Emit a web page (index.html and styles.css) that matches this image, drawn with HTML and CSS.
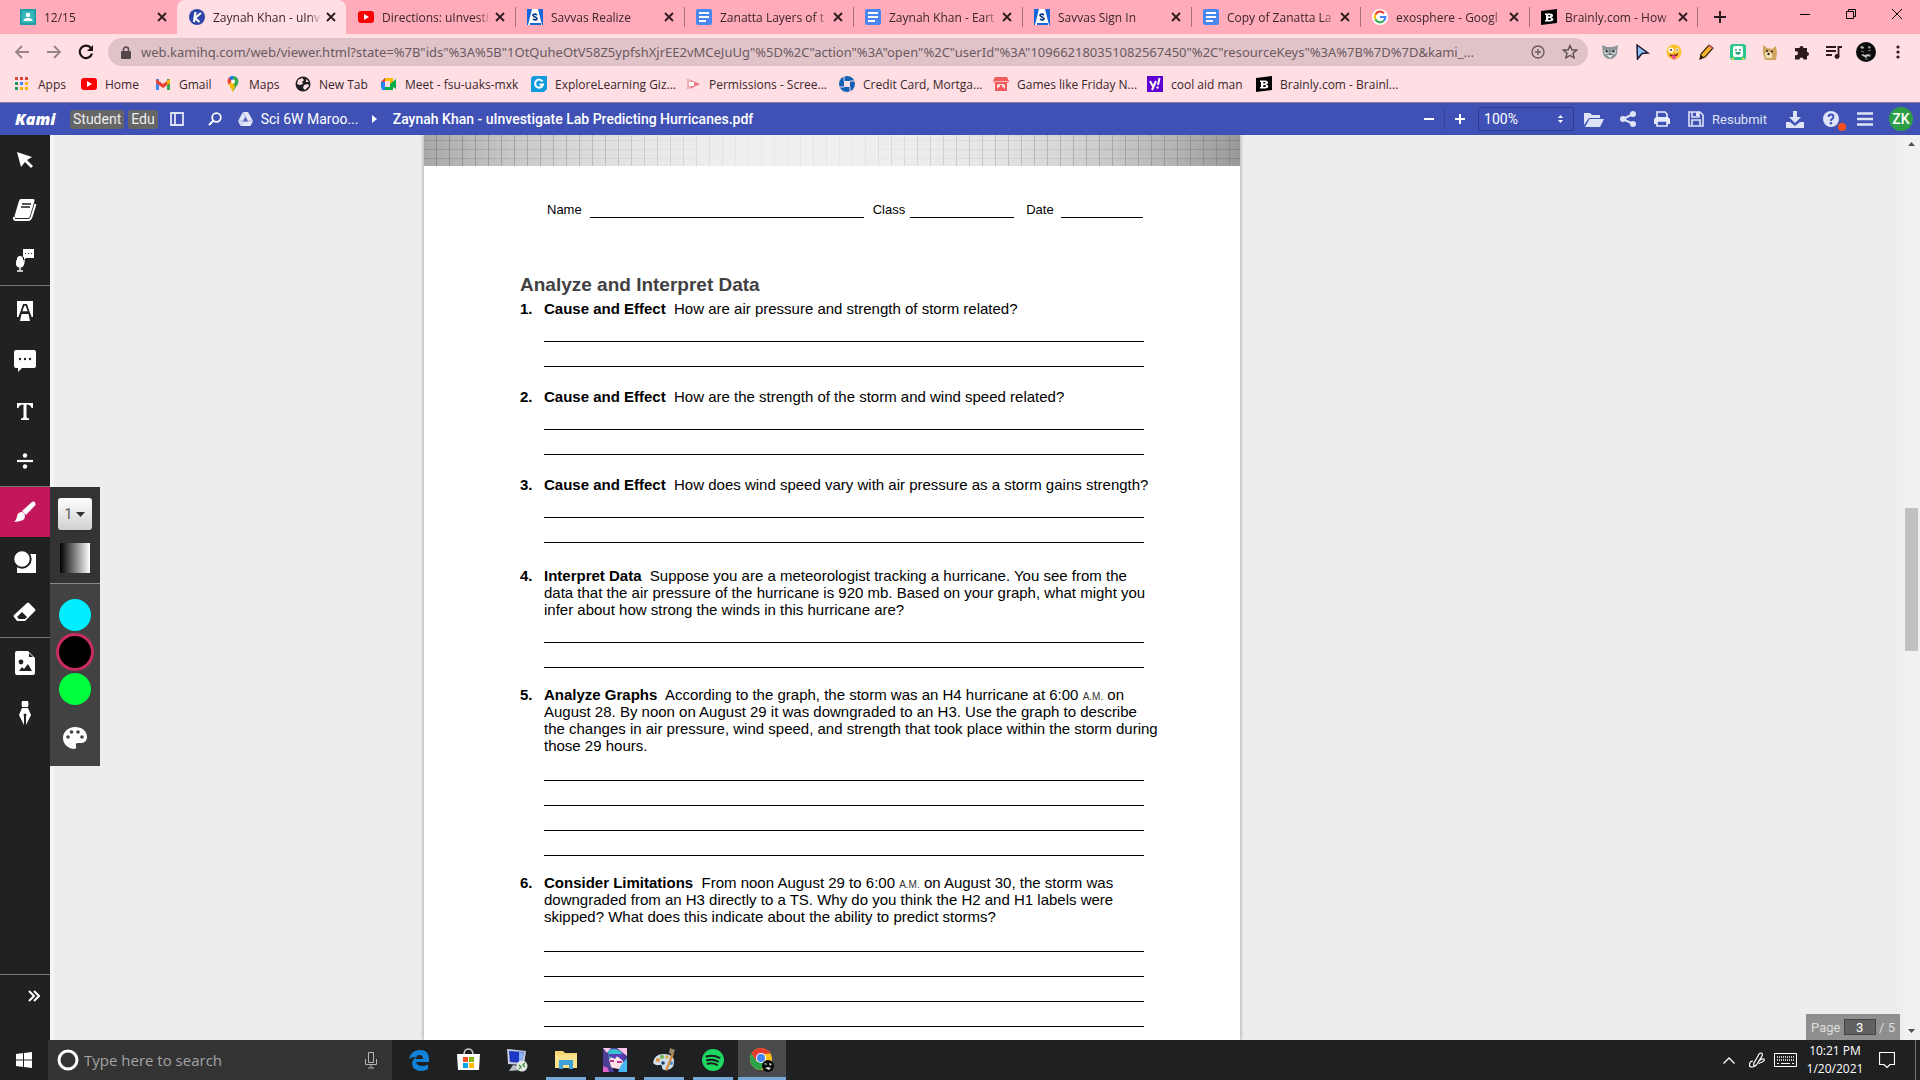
FILE: index.html
```html
<!DOCTYPE html>
<html lang="en">
<head>
    <meta charset="UTF-8">
    <meta name="viewport" content="width=device-width, initial-scale=1.0">
    <title>Zaynah Khan - uInvestigate Lab Predicting Hurricanes.pdf</title>

    <link rel="stylesheet" href="styles.css">
</head>
<body>

<!-- shared icons -->
<svg class="defs" aria-hidden="true">
    <symbol id="i-close" viewBox="0 0 10 10"><path d="M1 1l8 8M9 1L1 9" stroke="#2c1a1e" stroke-width="1.8"/></symbol>
    <symbol id="i-youtube" viewBox="0 0 16 16"><rect x="0" y="2" width="16" height="12" rx="3" fill="#f00"/><path d="M6 5v6l5-3z" fill="#fff"/></symbol>
    <symbol id="i-savvas" viewBox="0 0 16 16"><path d="M0 0h16v16H0z" fill="#fff"/><path d="M0 0h5L1 16H0zM11 0h5v16h-1z" fill="#1765d8"/><path d="M3 14h11v2H3z" fill="#1765d8"/><path d="M10 6Q8 4.500 6.500 5.500T8 8t1.500 2.500T6 10" fill="none" stroke="#0b3a86" stroke-width="1.700"/></symbol>
    <symbol id="i-docs" viewBox="0 0 16 16"><rect width="16" height="16" rx="2" fill="#4a86f0"/><path d="M3 4h10M3 8h10M3 12h7" stroke="#fff" stroke-width="1.800"/></symbol>
    <symbol id="i-brainly" viewBox="0 0 16 16"><path d="M0 2l16-2v14L0 16z" fill="#000"/><path d="M4 4.500h5q3 0 3 2t-2 2q2.500.300 2.500 2t-3 2H4v-1.500h1V6H4zM7.300 6v1.600h1q1.300 0 1.300-.8T8.300 6zm0 3v2h1.300q1.400 0 1.400-1T8.600 9z" fill="#fff" fill-rule="evenodd"/></symbol>
</svg>

<header class="browser">
    <!-- tabs -->
    <div class="tabs">
        <div class="tab">
            <svg class="ico" viewBox="0 0 16 16"><rect width="16" height="16" rx="1" fill="#1f9fa5"/><rect x="2" y="2" width="12" height="12" fill="#35b9b8"/><circle cx="8" cy="6" r="2.200" fill="#fff"/><path d="M3.500 12q0-3 4.500-3t4.500 3z" fill="#fff"/></svg>
            <button class="tab-title">12/15</button>
            <button class="tab-close" aria-label="Close"><svg><use href="#i-close"/></svg></button>
        </div>
        <div class="tab active">
            <svg class="ico" viewBox="0 0 16 16"><circle cx="8" cy="8" r="8" fill="#2f45a8"/><path d="M6.500 3L5 13M12 4L6 9l4.500 4" stroke="#fff" stroke-width="2.200" fill="none"/></svg>
            <button class="tab-title">Zaynah Khan - uInv</button>
            <button class="tab-close" aria-label="Close"><svg><use href="#i-close"/></svg></button>
        </div>
        <div class="tab">
            <svg class="ico"><use href="#i-youtube"/></svg>
            <button class="tab-title">Directions: uInvesti</button>
            <button class="tab-close" aria-label="Close"><svg><use href="#i-close"/></svg></button>
        </div>
        <div class="tab sep">
            <svg class="ico"><use href="#i-savvas"/></svg>
            <button class="tab-title">Savvas Realize</button>
            <button class="tab-close" aria-label="Close"><svg><use href="#i-close"/></svg></button>
        </div>
        <div class="tab sep">
            <svg class="ico"><use href="#i-docs"/></svg>
            <button class="tab-title">Zanatta Layers of t</button>
            <button class="tab-close" aria-label="Close"><svg><use href="#i-close"/></svg></button>
        </div>
        <div class="tab sep">
            <svg class="ico"><use href="#i-docs"/></svg>
            <button class="tab-title">Zaynah Khan - Eart</button>
            <button class="tab-close" aria-label="Close"><svg><use href="#i-close"/></svg></button>
        </div>
        <div class="tab sep">
            <svg class="ico"><use href="#i-savvas"/></svg>
            <button class="tab-title">Savvas Sign In</button>
            <button class="tab-close" aria-label="Close"><svg><use href="#i-close"/></svg></button>
        </div>
        <div class="tab sep">
            <svg class="ico"><use href="#i-docs"/></svg>
            <button class="tab-title">Copy of Zanatta La</button>
            <button class="tab-close" aria-label="Close"><svg><use href="#i-close"/></svg></button>
        </div>
        <div class="tab sep">
            <svg class="ico" viewBox="0 0 16 16"><circle cx="8" cy="8" r="8" fill="#fff"/><g fill="none" stroke-width="2.200"><path d="M12 4.300A5.300 5.300 0 0 0 3.400 5.600" stroke="#ea4335"/><path d="M3.400 5.600a5.300 5.300 0 0 0 0 4.800" stroke="#fbbc05"/><path d="M3.400 10.400a5.300 5.300 0 0 0 8.400 1.400" stroke="#34a853"/><path d="M11.800 11.800A5.300 5.300 0 0 0 13.300 8H8" stroke="#4285f4"/></g></svg>
            <button class="tab-title">exosphere - Googl</button>
            <button class="tab-close" aria-label="Close"><svg><use href="#i-close"/></svg></button>
        </div>
        <div class="tab sep last">
            <svg class="ico"><use href="#i-brainly"/></svg>
            <button class="tab-title">Brainly.com - How</button>
            <button class="tab-close" aria-label="Close"><svg><use href="#i-close"/></svg></button>
        </div>
        <button class="new-tab" aria-label="New tab"><svg width="12" height="12" viewBox="0 0 12 12"><path d="M6 0v12M0 6h12" stroke="#2c1a1e" stroke-width="2"/></svg></button>
        <div class="win-btns">
            <button aria-label="Minimize"><svg width="10" height="10" viewBox="0 0 10 10"><path d="M0 5.500h10" stroke="#000"/></svg></button>
            <button aria-label="Restore"><svg width="10" height="10" viewBox="0 0 10 10"><path d="M.5 2.500h7v7h-7zM2.500 2.500v-2h7v7h-2" stroke="#000" fill="none"/></svg></button>
            <button aria-label="Close window"><svg width="10" height="10" viewBox="0 0 10 10"><path d="M0 0l10 10M10 0L0 10" stroke="#000"/></svg></button>
        </div>
    </div>

    <!-- address bar -->
    <div class="toolbar">
        <div class="nav-btns">
            <button aria-label="Back"><svg width="16" height="16" viewBox="0 0 16 16"><path d="M15 8H2M8 2L2 8l6 6" stroke="#97848a" stroke-width="1.800" fill="none"/></svg></button>
            <button aria-label="Forward"><svg width="16" height="16" viewBox="0 0 16 16"><path d="M1 8h13M8 2l6 6-6 6" stroke="#97848a" stroke-width="1.800" fill="none"/></svg></button>
            <button aria-label="Reload"><svg width="16" height="16" viewBox="0 0 16 16"><path d="M13 4.200A6.200 6.200 0 1 0 14 9.500" stroke="#1c1214" stroke-width="2.200" fill="none"/><path d="M15 1v6H9z" fill="#1c1214"/></svg></button>
        </div>
        <div class="omnibox">
            <svg width="10" height="13" viewBox="0 0 10 13"><rect y="5" width="10" height="8" rx="1" fill="#55484c"/><path d="M2.500 5.500V3.500a2.500 2.500 0 0 1 5 0v2" stroke="#55484c" stroke-width="1.500" fill="none"/></svg>
            <input type="text" aria-label="Address" value="web.kamihq.com/web/viewer.html?state=%7B&quot;ids&quot;%3A%5B&quot;1OtQuheOtV58Z5ypfshXjrEE2vMCeJuUg&quot;%5D%2C&quot;action&quot;%3A&quot;open&quot;%2C&quot;userId&quot;%3A&quot;109662180351082567450&quot;%2C&quot;resourceKeys&quot;%3A%7B%7D%7D&amp;kami_...">
            <button aria-label="Zoom"><svg width="14" height="14" viewBox="0 0 14 14"><circle cx="7" cy="7" r="6" fill="none" stroke="#6b5a60" stroke-width="1.400"/><path d="M7 4v6M4 7h6" stroke="#6b5a60" stroke-width="1.400"/></svg></button>
            <button aria-label="Bookmark"><svg width="16" height="16" viewBox="0 0 16 16"><path d="M8 1.500l1.900 4.300 4.700.4-3.600 3.100 1.100 4.600L8 11.500l-4.100 2.400L5 9.300 1.400 6.200l4.700-.4z" fill="none" stroke="#5c4d52" stroke-width="1.400"/></svg></button>
        </div>
        <div class="exts">
            <button aria-label="Cat"><svg viewBox="0 0 16 16"><path d="M0 1l5 2h6l5-2-1 9q-2 5-7 5t-7-5z" fill="#8e989c"/><path d="M2 6l5 3-4 1zM14 6L9 9l4 1z" fill="#fff"/><circle cx="4.500" cy="7.500" r="1.200" fill="#333"/><circle cx="11.500" cy="7.500" r="1.200" fill="#333"/><path d="M5 11h6l-3 3z" fill="#e8ecec"/><path d="M7 10h2l-1 1.500z" fill="#333"/></svg></button>
            <button aria-label="Custom cursor"><svg viewBox="0 0 16 16"><path d="M3 1l11 8-6 .5L3.500 15z" fill="#8fc4f4" stroke="#1c1633" stroke-width="1.500"/></svg></button>
            <button aria-label="Emoji"><svg viewBox="0 0 16 16"><circle cx="8" cy="8" r="7.500" fill="#fcc32e"/><circle cx="5" cy="6" r="2.600" fill="#fff"/><circle cx="11" cy="6" r="1.800" fill="#fff"/><circle cx="5" cy="6" r="1" fill="#4a2b0c"/><circle cx="11" cy="6" r=".8" fill="#4a2b0c"/><path d="M3.500 10q4 2 9-1-1 4-5 4t-4-3z" fill="#7a2b12"/><path d="M6 11.500h4V14q-2 3-4 0z" fill="#f0559a"/></svg></button>
            <button aria-label="Pencil"><svg viewBox="0 0 16 16"><path d="M2 15l1-5L11 1l4 3-8 9z" fill="#f5b62a" stroke="#3b2308" stroke-width="1.200"/><path d="M2 15l1-4 3 2.500z" fill="#2b1a0a"/><path d="M10 2l4 3 1-1-4-3z" fill="#e7607b"/></svg></button>
            <button aria-label="Bitmoji"><svg viewBox="0 0 16 16"><rect width="16" height="16" rx="3" fill="#29c78f"/><rect x="3" y="2" width="10" height="11" rx="2" fill="#fff"/><circle cx="6" cy="6" r="1" fill="#29a37a"/><circle cx="10" cy="6" r="1" fill="#29a37a"/><path d="M5 8h6q-1 3-3 3T5 8z" fill="#29a37a"/><path d="M1 15l3-2v3zM15 15l-3-2v3z" fill="#f2d43b"/></svg></button>
            <button aria-label="Doge"><svg viewBox="0 0 16 16"><path d="M1 1l4 3 5 1 4-3 1 7-1 7H3L1 9z" fill="#cfa45f"/><path d="M3 9q4-3 7 1v4H4z" fill="#f3e3bd"/><circle cx="5" cy="7" r="1" fill="#2d2013"/><circle cx="10" cy="7.500" r="1" fill="#2d2013"/><circle cx="6.500" cy="10" r="1.200" fill="#2d2013"/></svg></button>
            <button aria-label="Extensions"><svg viewBox="0 0 16 16"><path d="M1 4h4.500a2 2 0 1 1 4 0H13v4a2 2 0 1 1 0 4v3.500H9.500a2 2 0 1 0-4 0H1V11a2 2 0 1 0 0-3.500z" fill="#2c1a1e"/></svg></button>
            <button aria-label="Media"><svg viewBox="0 0 16 16"><path d="M0 3h10M0 7h10M0 11h6M12.500 13V3H16" stroke="#2c1a1e" stroke-width="1.800" fill="none"/><circle cx="11" cy="12.500" r="2.400" fill="#2c1a1e"/></svg></button>
            <button aria-label="Profile"><svg class="profile" viewBox="0 0 20 20"><circle cx="10" cy="10" r="10" fill="#0b0b0b"/><path d="M4 5l3-1 1 2-2 1zM12 4l3 1-2 2zM5 13l2-1 2 1 3-1 2 1 1-2-1 4-2-1-2 2-3-2z" fill="#bdbdbd"/><path d="M5 9l3 1M12 9l3-1M9 17h3" stroke="#777"/></svg></button>
            <button aria-label="Menu"><svg viewBox="0 0 16 16"><circle cx="8" cy="3" r="1.600" fill="#2c1a1e"/><circle cx="8" cy="8" r="1.600" fill="#2c1a1e"/><circle cx="8" cy="13" r="1.600" fill="#2c1a1e"/></svg></button>
        </div>
    </div>

    <!-- bookmarks -->
    <nav class="bookmarks">
        <a href="#"><svg class="ico" viewBox="0 0 16 16"><path d="M1 1h3v3H1zM6 1h3v3H6z" fill="#db4437"/><path d="M11 1h3v3h-3z" fill="#db4437"/><path d="M1 6h3v3H1z" fill="#0f9d58"/><path d="M6 6h3v3H6z" fill="#4285f4"/><path d="M11 6h3v3h-3zM6 11h3v3H6zM11 11h3v3h-3z" fill="#f4b400"/><path d="M1 11h3v3H1z" fill="#0f9d58"/></svg>Apps</a>
        <a href="#"><svg class="ico"><use href="#i-youtube"/></svg>Home</a>
        <a href="#"><svg class="ico" viewBox="0 0 16 16"><path d="M1 3h3v11H1z" fill="#4285f4"/><path d="M12 3h3v11h-3z" fill="#34a853"/><path d="M1 3l7 5 7-5v4l-7 5-7-5z" fill="#ea4335"/><path d="M12 5l3-2v4l-3 2z" fill="#fbbc04"/></svg>Gmail</a>
        <a href="#"><svg class="ico" viewBox="0 0 16 16"><path d="M8 0a5.500 5.500 0 0 1 5.500 5.500Q13.500 8 11 11t-3 5z" fill="#34a853"/><path d="M8 0a5.500 5.500 0 0 0-4.500 2L8 6z" fill="#1a73e8"/><path d="M3.500 2Q1.500 5 3.500 8.500L8 5z" fill="#ea4335"/><path d="M3.500 8.500L8 16q0-3 2-5L8 5z" fill="#fbbc04"/><circle cx="8" cy="5.500" r="2" fill="#fff"/></svg>Maps</a>
        <a href="#"><svg class="ico" viewBox="0 0 16 16"><circle cx="8" cy="8" r="7.500" fill="#1f1f23"/><path d="M3 4l4-2 2 2-2 2 1 2-3 1-3-1zM9 9l4-1 1 2-4 4-2-2zM11 3l3 3h-3z" fill="#ffdfe4"/></svg>New Tab</a>
        <a href="#"><svg class="ico" viewBox="0 0 16 16"><path d="M0 6l4-4h7v3H4v6H0z" fill="#1a73e8"/><path d="M0 6l4-4v4z" fill="#ea4335"/><path d="M4 2h8v5l-3 1V5H4z" fill="#fbbc04"/><path d="M0 10h4v1h5V8l6-5v10l-3-2v3H1z" fill="#00ac47"/><path d="M0 6h4v8H1z" fill="#2684fc"/></svg>Meet - fsu-uaks-mxk</a>
        <a href="#"><svg class="ico" viewBox="0 0 16 16"><path d="M2 0h14v13l-3 3H0V2z" fill="#109bdc"/><path d="M11.500 5.500a4 4 0 1 0 .5 3H8.500" fill="none" stroke="#fff" stroke-width="2"/></svg>ExploreLearning Giz...</a>
        <a href="#"><svg class="ico" viewBox="0 0 16 16"><path d="M1 2l14 6-14 6 1-3V5z" fill="#f2b0b6"/><path d="M5 4l10 4-10 5 1-3h3V6H6z" fill="#e87a86"/><path d="M4 6h5v4H4z" fill="#fff"/></svg>Permissions - Scree...</a>
        <a href="#"><svg class="ico" viewBox="0 0 16 16"><circle cx="8" cy="8" r="8" fill="#1261b4"/><path d="M5 5h6v6H5z" fill="#ffdfe4"/><path d="M5 0v5M16 5h-5M11 16v-5M0 11h5" stroke="#ffdfe4" stroke-width="1"/></svg>Credit Card, Mortga...</a>
        <a href="#"><svg class="ico" viewBox="0 0 16 16"><path d="M2 1h12l2 4q-1 2-2 2v8H2V7Q1 7 0 5z" fill="#f05a5b"/><path d="M4 13V9l1.500-1h5L12 9v4l-2-2H6z" fill="#ffdfe4"/><path d="M7 9h2v2H7z" fill="#f05a5b"/><path d="M1 5.500h14" stroke="#fbb"/></svg>Games like Friday N...</a>
        <a href="#"><svg class="ico" viewBox="0 0 16 16"><path d="M0 0h16v16H0z" fill="#5f01d1"/><path d="M3 5l3 5.500M9 5l-4 9M12.500 2l-1.500 7" stroke="#fff" stroke-width="2" fill="none"/><circle cx="10.500" cy="11.500" r="1.200" fill="#fff"/></svg>cool aid man</a>
        <a href="#"><svg class="ico"><use href="#i-brainly"/></svg>Brainly.com - Brainl...</a>
    </nav>
</header>

<!-- kami header -->
<div class="kami-bar">
    <a class="kami-logo" href="#">Kami</a>
    <span class="badge">Student</span>
    <span class="badge">Edu</span>
    <button class="panel-btn" aria-label="Thumbnails"><svg width="14" height="14" viewBox="0 0 14 14"><path d="M1 1h12v12H1zM5 1v12" fill="none" stroke="#dfe3f7" stroke-width="1.800"/></svg></button>
    <button class="find-btn" aria-label="Search"><svg width="14" height="14" viewBox="0 0 14 14"><circle cx="8.500" cy="5.500" r="4.300" fill="none" stroke="#fff" stroke-width="1.800"/><path d="M5.500 8.500L1 13" stroke="#fff" stroke-width="2"/></svg></button>
    <a class="folder" href="#"><svg width="15" height="14" viewBox="0 0 15 14"><path d="M5 0h5l5 9-2.500 5h-10L0 9z" fill="#e3e6f8"/><path d="M7.500 5L10 9.500H5z" fill="#3f51b5"/><path d="M5 0l4.500 8.500M0 9h15M7.500 4L2.500 14" stroke="#8b97d6" stroke-width=".6"/></svg>Sci 6W Maroo...</a>
    <svg class="crumb" width="5" height="8" viewBox="0 0 5 8"><path d="M0 0l5 4-5 4z" fill="#fff"/></svg>
    <span class="file-name">Zaynah Khan - uInvestigate Lab Predicting Hurricanes.pdf</span>
    <div class="kami-tools">
        <button class="zoom-btn" aria-label="Zoom out"><svg width="10" height="10" viewBox="0 0 10 10"><path d="M0 5h10" stroke="#fff" stroke-width="2"/></svg></button>
        <button class="zoom-btn plus" aria-label="Zoom in"><svg width="10" height="10" viewBox="0 0 10 10"><path d="M0 5h10M5 0v10" stroke="#fff" stroke-width="2"/></svg></button>
        <div class="zoom-select">
            <select aria-label="Zoom level"><option>100%</option></select>
            <svg width="5" height="8" viewBox="0 0 5 8"><path d="M0 3l2.500-3L5 3zM0 5l2.500 3L5 5z" fill="#fff"/></svg>
        </div>
        <button class="t-btn" aria-label="Open"><svg width="20" height="15" viewBox="0 0 20 15"><path d="M0 13V1h6l2 2h8v3H5z" fill="#dfe3f7"/><path d="M1 15l4.500-8H20l-4 8z" fill="#dfe3f7"/></svg></button>
        <button class="t-btn" aria-label="Share"><svg width="16" height="16" viewBox="0 0 16 16"><path d="M13 3L3 8l10 5" fill="none" stroke="#dfe3f7" stroke-width="2"/><circle cx="13" cy="3" r="3" fill="#dfe3f7"/><circle cx="3" cy="8" r="3" fill="#dfe3f7"/><circle cx="13" cy="13" r="3" fill="#dfe3f7"/></svg></button>
        <button class="t-btn" aria-label="Print"><svg width="16" height="16" viewBox="0 0 16 16"><path d="M3 7V1h8l2 2v4M3 10v5h10v-5z" fill="none" stroke="#e8ebfa" stroke-width="1.600"/><path d="M0 13V8l2-2h12l2 2v5h-3v-3H3v3z" fill="#e8ebfa"/></svg></button>
        <button class="save-btn"><svg width="16" height="16" viewBox="0 0 16 16"><path d="M1 1h11l3 3v11H1zM4 1v5h7V1M4 15V9h8v6" fill="none" stroke="#dfe3f7" stroke-width="1.600"/><path d="M8 1h3v4H8z" fill="#dfe3f7"/></svg>Resubmit</button>
        <button class="t-btn dl" aria-label="Download"><svg width="18" height="18" viewBox="0 0 18 18"><path d="M7 1h4v6h4l-6 6-6-6h4z" fill="#dfe3f7"/><path d="M0 12h4l5 4 5-4h4v6H0z" fill="#dfe3f7"/></svg></button>
        <button class="t-btn help" aria-label="Help"><svg width="16" height="16" viewBox="0 0 16 16"><circle cx="8" cy="8" r="8" fill="#dfe3f7"/><path d="M5.500 6q0-2.500 2.500-2.500T10.500 6Q10.500 7 8 9v1" fill="none" stroke="#3f51b5" stroke-width="1.800"/><circle cx="8" cy="12.300" r="1.200" fill="#3f51b5"/></svg></button>
        <button class="t-btn" aria-label="Menu"><svg width="16" height="14" viewBox="0 0 16 14"><path d="M0 1.500h16M0 7h16M0 12.500h16" stroke="#dfe3f7" stroke-width="2.600"/></svg></button>
        <button class="avatar">ZK</button>
    </div>
</div>

<main class="workspace">
    <!-- tools -->
    <aside class="sidebar">
        <button aria-label="Select"><svg width="18" height="18" viewBox="0 0 18 18"><path d="M1 1l15 5-5 3 6 6-2 2-6-6-4 5z" fill="#fff"/></svg></button>
        <button aria-label="Dictionary"><svg width="24" height="24" viewBox="0 0 24 24"><path d="M8 1h12q2 0 1.500 2L17 18q-.5 2-2 2H3q-2 0-1.500-2L6 3q.5-2 2-2z" fill="#fff"/><path d="M22.500 6L18.500 19q-1 3-3.500 3H3q-2.500 0-2-3" fill="none" stroke="#fff" stroke-width="2"/><path d="M9 6h9M8 9h9" stroke="#212121" stroke-width="1.300"/></svg></button>
        <button aria-label="Read aloud"><svg width="18" height="24" viewBox="0 0 18 24"><path d="M7 1h11v9h-8l-2 2V9H7z" fill="#fff"/><path d="M9 5.500h7" stroke="#212121" stroke-dasharray="1 2"/><rect x="1" y="8" width="6" height="11" rx="3" fill="#fff"/><path d="M0 12q0 7 4 7t4-7M4 18v4M1 23h6" fill="none" stroke="#fff" stroke-width="1.500"/></svg></button>
        <hr>
        <button aria-label="Markup"><svg width="18" height="20" viewBox="0 0 18 20"><path d="M1 0h16v16h-2L11 3H7L3 16H1z" fill="#fff"/><path d="M8 4h2l2 7H6zM5.500 13h7l1.500 7H4z" fill="#fff"/><path d="M3 16L8 4h2l5 12M6 11h6" fill="none" stroke="#212121" stroke-width="1.300"/></svg></button>
        <button aria-label="Comment"><svg width="22" height="22" viewBox="0 0 22 22"><path d="M2 0h18q2 0 2 2v14q0 2-2 2H8l-4 4v-4H2q-2 0-2-2V2q0-2 2-2z" fill="#fff"/><circle cx="6" cy="9" r="1.200" fill="#212121"/><circle cx="11" cy="9" r="1.200" fill="#212121"/><circle cx="16" cy="9" r="1.200" fill="#212121"/></svg></button>
        <button aria-label="Text box"><svg width="16" height="17" viewBox="0 0 16 17"><path d="M0 0h16v5h-1.500Q14 1.500 9.500 1.500V14q0 1 2.500 1.500V17H4v-1.500Q6.500 15 6.500 14V1.500Q2 1.500 1.500 5H0z" fill="#fff"/></svg></button>
        <button aria-label="Equation"><svg width="16" height="16" viewBox="0 0 16 16"><path d="M0 8h16" stroke="#fff" stroke-width="2.200"/><circle cx="8" cy="2.500" r="2.200" fill="#fff"/><circle cx="8" cy="13.500" r="2.200" fill="#fff"/></svg></button>
        <hr>
        <button class="on" aria-label="Drawing"><svg width="22" height="22" viewBox="0 0 22 22"><path d="M18 1q2-1 3 .5t0 3L12 14l-4-4z" fill="#fff"/><path d="M7 11q4 0 4 4.500T1 21Q0 21 1 20t2-4q0-4 4-5z" fill="#fff"/></svg></button>
        <button aria-label="Shapes"><svg width="22" height="22" viewBox="0 0 22 22"><path d="M3 3h19v19H3z" fill="#fff"/><circle cx="8" cy="8" r="8.700" fill="#fff" stroke="#212121" stroke-width="2"/></svg></button>
        <button aria-label="Eraser"><svg width="24" height="20" viewBox="0 0 24 20"><path d="M14 1q1-1 2 0l6 6q1 1 0 2L12 19H4l-3-4q-1-1 0-2z" fill="#fff"/><path d="M4 15l5-5 5 5-2 2H6z" fill="#212121"/></svg></button>
        <hr>
        <button aria-label="Add media"><svg width="20" height="24" viewBox="0 0 20 24"><path d="M2 0h11l7 7v15q0 2-2 2H2q-2 0-2-2V2q0-2 2-2z" fill="#fff"/><path d="M14 2v4h4z" fill="#212121"/><circle cx="6" cy="11" r="2.400" fill="#212121"/><path d="M4 20l3-4 2 2 4-5 4 7z" fill="#212121"/></svg></button>
        <button aria-label="Signature"><svg width="12" height="24" viewBox="0 0 12 24"><path d="M3 0h6q1 3 0 6H3Q2 3 3 0zM3 7h6l3 7-5 10V15H5v9L0 14z" fill="#fff"/><circle cx="6" cy="14" r="1.500" fill="#212121"/></svg></button>
        <hr class="push">
        <button class="expand" aria-label="Expand"><svg width="12" height="12" viewBox="0 0 12 12"><path d="M1 1l5 5-5 5M6 1l5 5-5 5" fill="none" stroke="#fff" stroke-width="2"/></svg></button>
    </aside>

    <!-- drawing options -->
    <div class="flyout">
        <div class="pen">
            <button class="size">1<svg width="9" height="5" viewBox="0 0 9 5"><path d="M0 0h9L4.500 5z" fill="#333"/></svg></button>
            <button class="opacity" aria-label="Opacity"></button>
        </div>
        <div class="colors">
            <button class="dot cyan" aria-label="Cyan"></button>
            <button class="dot black" aria-label="Black"></button>
            <button class="dot green" aria-label="Green"></button>
            <button class="palette" aria-label="More colors"><svg width="24" height="24" viewBox="0 0 24 24"><path d="M12 1C5 1 0 6 0 12s5 11 12 11q2-1 1-3-1-3 2-3h4q5-1 5-6C24 5 19 1 12 1z" fill="#fff"/><g fill="#424242"><circle cx="5" cy="11" r="1.800"/><circle cx="8.500" cy="6" r="1.800"/><circle cx="15" cy="6" r="1.800"/><circle cx="19" cy="11" r="1.800"/></g></svg></button>
        </div>
    </div>

    <!-- pdf -->
    <div class="viewer">
        <article class="page">
            <div class="banner"></div>
            <div class="fields">
                <span>Name</span><i class="f-name"></i>
                <span>Class</span><i class="f-class"></i>
                <span>Date</span><i class="f-date"></i>
            </div>
            <h1>Analyze and Interpret Data</h1>
            <ol class="questions">
                <li>
                    <p><b>Cause and Effect</b>&nbsp; How are air pressure and strength of storm related?</p>
                    <i></i><i></i>
                </li>
                <li>
                    <p><b>Cause and Effect</b>&nbsp; How are the strength of the storm and wind speed related?</p>
                    <i></i><i></i>
                </li>
                <li>
                    <p><b>Cause and Effect</b>&nbsp; How does wind speed vary with air pressure as a storm gains strength?</p>
                    <i></i><i></i>
                </li>
                <li class="mid">
                    <p><b>Interpret Data</b>&nbsp; Suppose you are a meteorologist tracking a hurricane. You see from the<br>
                    data that the air pressure of the hurricane is 920 mb. Based on your graph, what might you<br>
                    infer about how strong the winds in this hurricane are?</p>
                    <i></i><i></i>
                </li>
                <li class="long">
                    <p><b>Analyze Graphs</b>&nbsp; According to the graph, the storm was an H4 hurricane at 6:00 <small>A.M.</small> on<br>
                    August 28. By noon on August 29 it was downgraded to an H3. Use the graph to describe<br>
                    the changes in air pressure, wind speed, and strength that took place within the storm during<br>
                    those 29 hours.</p>
                    <i></i><i></i><i></i><i></i>
                </li>
                <li class="long">
                    <p><b>Consider Limitations</b>&nbsp; From noon August 29 to 6:00 <small>A.M.</small> on August 30, the storm was<br>
                    downgraded from an H3 directly to a TS. Why do you think the H2 and H1 labels were<br>
                    skipped? What does this indicate about the ability to predict storms?</p>
                    <i></i><i></i><i></i><i></i>
                </li>
            </ol>
        </article>
    </div>

    <div class="page-nav">
        <label for="pageNo">Page</label>
        <input type="text" id="pageNo" value="3">
        <span>/ 5</span>
    </div>

    <div class="scrollbar">
        <svg width="7" height="4" viewBox="0 0 7 4"><path d="M0 4l3.500-4L7 4z" fill="#505050"/></svg>
        <div class="thumb"></div>
        <svg width="7" height="4" viewBox="0 0 7 4"><path d="M0 0h7L3.500 4z" fill="#505050"/></svg>
    </div>
</main>

<!-- windows taskbar -->
<footer class="taskbar">
    <button class="start" aria-label="Start"><svg width="16" height="16" viewBox="0 0 16 16"><path d="M0 2l7-1v6.500H0zM8 1l8-1v7.500H8zM0 8.500h7V15l-7-1zM8 8.500h8V16l-8-1z" fill="#fff"/></svg></button>
    <div class="search">
        <svg width="22" height="22" viewBox="0 0 22 22"><circle cx="11" cy="11" r="9" fill="none" stroke="#fff" stroke-width="3"/></svg>
        <input type="text" aria-label="Search" placeholder="Type here to search">
        <svg width="12" height="18" viewBox="0 0 12 18"><path d="M3.500 1.500h5v10h-5zM.5 8v5.500h11V8M6 13.500v3M3 17h6" fill="none" stroke="#b5b5b5"/></svg>
    </div>
    <div class="apps">
        <button aria-label="Edge"><svg width="22" height="22" viewBox="0 0 22 22"><path d="M1 10Q3 1 12 1t9 9v3H8q1 4 6 4 3 0 6-1.500V20q-3 2-7 2-8 0-9-7 0-5 5-7-5-.5-8 2zm7 0h7q0-4-3.500-4T8 10z" fill="#1283d9" fill-rule="evenodd"/></svg></button>
        <button aria-label="Store"><svg width="23" height="24" viewBox="0 0 23 24"><path d="M7 7q0-6 4.500-6T16 7" fill="none" stroke="#ccc" stroke-width="1.500"/><path d="M0 6h23l-1 16H1z" fill="#fff"/><path d="M6 9h5v5H6z" fill="#f25022"/><path d="M12 9h5v5h-5z" fill="#7fba00"/><path d="M6 15h5v5H6z" fill="#00a4ef"/><path d="M12 15h5v5h-5z" fill="#ffb900"/></svg></button>
        <button aria-label="Remote desktop"><svg width="24" height="24" viewBox="0 0 24 24"><path d="M2 1l19 2-2 14L3 16z" fill="#c5ccd8"/><path d="M4 3l15 1-2 11-12-1z" fill="#1c36c6"/><path d="M14 4l5 .5L17 15l-3-.5z" fill="#8db0f0"/><path d="M8 17l6 1 2 4-12 1z" fill="#b9bec6"/><circle cx="17" cy="18" r="5.500" fill="#e3e8e3"/><path d="M14 17l2 2-2 2M20 15l-2 2 2 2" fill="none" stroke="#3d8b37" stroke-width="1.300"/></svg></button>
        <button class="open" aria-label="File Explorer"><svg width="22" height="20" viewBox="0 0 22 20"><path d="M0 1h8l2 2h12v15H0z" fill="#f6d774"/><path d="M0 5h22v13H0z" fill="#fbe38e"/><path d="M4 10h14v9h-4v-4H8v4H4z" fill="#3f9fd8"/></svg></button>
        <button class="open" aria-label="Gacha"><svg width="24" height="24" viewBox="0 0 24 24"><path d="M0 0h24v24H0z" fill="#4b3e94"/><path d="M0 0h8L4 5zM14 0h10v8z" fill="#ffc6ec"/><path d="M5 3q7-5 14 2l-2 5H6z" fill="#37c0ce"/><path d="M6 11l6-3 8 3v8l-6 3-6-3z" fill="#ffe1e6"/><path d="M7 13h4M14 14h5" stroke="#b3368b" stroke-width="2"/><path d="M6 8l6 3 2-3 6 5V6H6z" fill="#5a3db8"/><path d="M18 17l6-7v14h-9z" fill="#47b8ef"/><path d="M0 18l5 2 1 4H0z" fill="#dc62c8"/><path d="M10 20l6 1-1 3h-4z" fill="#20142f"/></svg></button>
        <button class="open" aria-label="Paint"><svg width="24" height="24" viewBox="0 0 24 24"><path d="M1 15Q2 6 12 6t10 8-9 8q-3 0-3-3t-3-2-6-2z" fill="#cfe0ec"/><circle cx="6" cy="12" r="2" fill="#e8903c"/><circle cx="10" cy="9" r="2" fill="#72b84b"/><circle cx="15" cy="9" r="1.800" fill="#d8b23a"/><circle cx="11" cy="15" r="1.800" fill="#183f66"/><circle cx="19" cy="15" r="2" fill="#4f8fd0"/><path d="M20 5l2 1-7 17-2-1z" fill="#d68a3c"/><path d="M18 0l5 2-2 5-4-2z" fill="#9c8a67"/></svg></button>
        <button class="open" aria-label="Spotify"><svg width="22" height="22" viewBox="0 0 22 22"><circle cx="11" cy="11" r="11" fill="#1ed760"/><path d="M4.500 7.500q7-2 13 1.300M5 11.300q6-1.600 11 1.200M5.500 14.800q5-1.300 9.500 1" fill="none" stroke="#191d1b" stroke-width="2" stroke-linecap="round"/></svg></button>
        <button class="open current" aria-label="Chrome"><svg width="24" height="24" viewBox="0 0 24 24"><circle cx="11" cy="11" r="11" fill="#fbc116"/><path d="M1.500 5.500A11 11 0 0 1 20.500 5.500L11 6l-5 7z" fill="#e33b2e"/><path d="M1.500 5.500A11 11 0 0 0 11 22l4.500-8-9-.5z" fill="#2ba24c"/><circle cx="11" cy="10" r="5" fill="#fff"/><circle cx="11" cy="10" r="4" fill="#4285f4"/><circle cx="18" cy="18" r="6" fill="#080808"/><path d="M14 16l2-1 1 2zM19 15l3 1-2 2zM15 20l3-1 3 1-2 2z" fill="#ddd"/></svg></button>
    </div>
    <div class="tray">
        <button aria-label="Hidden icons"><svg width="12" height="7" viewBox="0 0 12 7"><path d="M.5 6.500L6 1l5.500 5.500" fill="none" stroke="#fff" stroke-width="1.300"/></svg></button>
        <button aria-label="Windows Ink"><svg width="16" height="16" viewBox="0 0 16 16"><path d="M4 9q-3 0-3.500 3t2.500 3q3 0 5-3l5-8q1-3-1-3t-3 3l-4 7q-1 3 1 3M9 10q3-4 6-3 1 2-2 3t-3 2" fill="none" stroke="#fff" stroke-width="1.200"/></svg></button>
        <button aria-label="Touch keyboard"><svg width="23" height="14" viewBox="0 0 23 14"><path d="M.5.5h22v13H.500z" fill="none" stroke="#fff"/><path d="M3 4h17M3 7h17" stroke="#fff" stroke-width="1.500" stroke-dasharray="1 1"/><path d="M3 10.500h2M7 10.500h9M18 10.500h2" stroke="#fff"/></svg></button>
        <button class="clock"><span>10:21 PM</span><span>1/20/2021</span></button>
        <button class="notif" aria-label="Notifications"><svg width="16" height="16" viewBox="0 0 16 16"><path d="M.5.500h15v12H11L8 15.500 5 12.500H.500z" fill="none" stroke="#fff" stroke-width="1.200"/></svg></button>
        <i class="peek"></i>
    </div>
</footer>

</body>
</html>
```

FILE: styles.css
```css
*, *::after, *::before {margin: 0;padding: 0;box-sizing: border-box;}
body {
    height: 100vh;
    display: flex;
    flex-direction: column;
    overflow: hidden;
    font-family: 'Segoe UI', 'Open Sans', sans-serif;
    font-size: 12px;
    color: #3a262b;
}
button, input, select {font: inherit;color: inherit;border: none;outline: none;background: none;}
button {display: flex;align-items: center;justify-content: center;}
a {color: inherit;text-decoration: none;}
svg {flex: none;display: block;}
.defs {width: 0;height: 0;position: absolute;}
.ico {width: 16px;height: 16px;}

/* tabs */
.tabs {
    height: 34px;
    padding-left: 8px;
    display: flex;
    background-color: #ffabb9;
}
.tab {
    flex: 0 1 169px;
    min-width: 0;
    padding: 0 10px 0 12px;
    display: flex;
    align-items: center;
    position: relative;
}
.tab.active {background-color: #ffdfe4;border-radius: 8px 8px 0 0;}
.tab.sep::before, .tab.last::after {
    content: '';
    width: 1px;
    height: 20px;
    background-color: #a8707c;
    position: absolute;
    left: 0;top: 7px;
}
.tab.last::after {left: auto;right: 0;}
.tab-title {
    flex: 1;
    height: 20px;
    margin: 0 4px 0 8px;
    justify-content: flex-start;
    overflow: hidden;
    white-space: nowrap;
    -webkit-mask-image: linear-gradient(to right, #000 88%, transparent);
    mask-image: linear-gradient(to right, #000 88%, transparent);
}
.tab-close {width: 10px;}
.tab-close svg {width: 10px;height: 10px;}
.new-tab {width: 44px;}
.win-btns {margin-left: auto;display: flex;height: 28px;}
.win-btns button {width: 46px;}

/* address bar */
.toolbar {
    height: 34px;
    padding: 4px 6px 0;
    display: flex;
    background-color: #ffdfe4;
}
.nav-btns {display: flex;width: 102px;}
.nav-btns button {width: 32px;height: 28px;}
.omnibox {
    flex: 1;
    height: 28px;
    padding: 0 7px 0 13px;
    display: flex;
    align-items: center;
    gap: 10px;
    border-radius: 14px;
    background-color: #e0c3c9;
}
.omnibox input {
    flex: 1;
    min-width: 0;
    font-family: 'Segoe UI', 'Noto Sans', sans-serif;
    font-size: 13px;
    color: #6b5a60;
}
.omnibox button {width: 22px;height: 22px;}
.exts {display: flex;padding-left: 6px;}
.exts button {width: 32px;height: 28px;}
.exts svg {width: 16px;height: 16px;}
.exts .profile {width: 20px;height: 20px;}

/* bookmarks */
.bookmarks {
    height: 35px;
    padding: 0 0 2px 14px;
    display: grid;
    grid-template-columns: 67px 74px 70px 70px 86px 150px 154px 154px 154px 154px 109px 1fr;
    background-color: #ffdfe4;
    border-bottom: 1px solid #8c7f9b;
}
.bookmarks a {display: flex;align-items: center;gap: 8px;white-space: nowrap;}

/* kami header */
.kami-bar {
    height: 32px;
    padding: 0 7px 0 15px;
    display: flex;
    align-items: center;
    background-color: #3f51b5;
    color: #fff;
    font-family: Roboto, sans-serif;
    font-size: 14px;
    white-space: nowrap;
}
.kami-logo {
    width: 55px;
    font-family: 'Open Sans', sans-serif;
    font-size: 16px;
    font-weight: 800;
    font-style: italic;
}
.badge {
    height: 19px;
    padding: 0 3px;
    margin-right: 4px;
    line-height: 19px;
    border-radius: 3px;
    background-color: #666;
    color: #eee;
}
.panel-btn {width: 30px;}
.find-btn {width: 46px;}
.folder {display: flex;align-items: center;gap: 8px;width: 134px;}
.crumb {margin-right: 16px;}
.file-name {font-weight: 500;}
.kami-tools {margin-left: auto;display: flex;align-items: center;}
.zoom-btn {width: 31px;height: 20px;}
.zoom-btn.plus {border-left: 1px solid #33439b;}
.zoom-select {
    width: 96px;
    height: 24px;
    margin: 0 3px;
    padding: 0 10px 0 5px;
    display: flex;
    align-items: center;
    border: 1px solid #2d3c94;
    border-radius: 2px;
}
.zoom-select select {flex: 1;appearance: none;-webkit-appearance: none;}
.t-btn {width: 34px;height: 24px;}
.save-btn {gap: 8px;padding: 0 8px 0 9px;font-size: 13px;color: #dfe3f7;}
.t-btn.dl {width: 39px;}
.t-btn.help {position: relative;}
.t-btn.help::after {
    content: '';
    width: 8px;
    height: 8px;
    border-radius: 50%;
    background-color: #f4511e;
    position: absolute;
    right: 2px;bottom: 0;
}
.avatar {
    width: 24px;
    height: 24px;
    margin-left: 7px;
    border-radius: 50%;
    background-color: #2e9e46;
    font-weight: 500;
}

/* workspace */
.workspace {
    flex: 1;
    min-height: 0;
    display: flex;
    position: relative;
    background-color: #ededed;
}
.sidebar {
    width: 50px;
    display: flex;
    flex-direction: column;
    background-color: #212121;
}
.sidebar button {width: 50px;height: 50px;}
.sidebar .on {background-color: #c2185b;}
.sidebar hr {border: none;border-top: 1px solid #777;}
.sidebar .push {margin-top: auto;}
.sidebar .expand {height: 65px;padding: 0 0 24px 18px;}
.flyout {
    width: 50px;
    position: absolute;
    left: 50px;top: 352px;
    background-color: #424242;
}
.pen {
    padding: 11px 0 10px;
    display: flex;
    flex-direction: column;
    align-items: center;
    gap: 13px;
    background-color: #333;
    border-bottom: 1px solid #888;
}
.size {
    width: 34px;
    height: 32px;
    gap: 4px;
    border-radius: 3px;
    background: linear-gradient(#fff, #d0d0d0);
    font-family: Roboto, sans-serif;
    font-size: 14px;
    color: #555;
}
.opacity {width: 30px;height: 30px;background: linear-gradient(to right, #000, #fff);}
.colors {
    padding: 15px 0 16px;
    display: flex;
    flex-direction: column;
    align-items: center;
    gap: 5px;
}
.dot {width: 32px;height: 32px;border-radius: 50%;}
.cyan {background-color: #00eeff;}
.black {background-color: #000;box-shadow: 0 0 0 3px #c82c61;}
.green {background-color: #00ff3c;}
.palette {height: 24px;margin-top: 16px;}

.viewer {flex: 1;overflow: hidden;border-left: 4px solid #f5f5f5;padding-right: 293px;}
.page {
    width: 816px;
    min-height: 100%;
    margin: 0 auto;
    background-color: #fff;
    box-shadow: 0 0 4px rgba(0, 0, 0, 0.4);
    color: #000;
    font-family: 'Liberation Sans', Arial, sans-serif;
    font-size: 15px;
    line-height: 17px;
}
.banner {
    height: 31px;
    background:
        linear-gradient(to right, transparent, rgba(240, 240, 240, 0.9) 38% 52%, transparent),
        repeating-linear-gradient(to right, transparent 0 12px, #888 12px 13px),
        repeating-linear-gradient(#0000 0 5px, #0002 5px 6px, #0000 6px 9px),
        linear-gradient(to right, #a8a8a8, #f0f0f0 45%, #ddd 65%, #999);
}
.fields {
    padding: 35px 0 0 123px;
    display: flex;
    font-size: 13px;
}
.fields i {height: 17px;border-bottom: 1px solid #000;}
.f-name {width: 274px;margin: 0 9px 0 8px;}
.f-class {width: 104px;margin: 0 12px 0 5px;}
.f-date {width: 82px;margin-left: 7px;}
.page h1 {
    padding: 57px 0 5px 96px;
    font-size: 19px;
    line-height: 20px;
    color: #414042;
}
.questions {padding: 0 96px 0 120px;list-style: none;counter-reset: q;}
.questions li {margin-bottom: 21px;counter-increment: q;}
.questions p {white-space: nowrap;}
.questions p::before {
    content: counter(q) '.';
    display: inline-block;
    width: 24px;
    margin-left: -24px;
    font-weight: bold;
}
.questions li i {display: block;height: 25px;border-bottom: 1px solid #000;}
.questions small {font-size: 10px;line-height: 1;color: #333;}
.questions .mid, .questions .long {margin-bottom: 18px;}
.questions .mid {padding-top: 3px;}
.questions .long p {margin-bottom: 2px;}

.page-nav {
    width: 94px;
    height: 26px;
    padding: 0 5px;
    display: flex;
    align-items: center;
    justify-content: space-between;
    position: absolute;
    right: 20px;bottom: 0;
    background-color: #8f8f8f;
    font-family: Roboto, sans-serif;
    font-size: 13px;
    color: #ddd;
}
.page-nav input {
    width: 32px;
    height: 16px;
    border: 1px solid #444;
    background-color: #606060;
    color: #fff;
    text-align: center;
}
.scrollbar {
    width: 17px;
    padding: 7px 0;
    display: flex;
    flex-direction: column;
    align-items: center;
    justify-content: space-between;
    background-color: #f1f1f1;
}
.thumb {width: 13px;height: 16%;margin-bottom: 16px;background-color: #c1c1c1;}

/* taskbar */
.taskbar {
    height: 40px;
    display: flex;
    background-color: #1e2022;
    color: #fff;
}
.start {width: 48px;}
.search {
    width: 344px;
    padding: 0 15px 0 9px;
    display: flex;
    align-items: center;
    gap: 5px;
    background-color: #333;
    font-size: 15px;
}
.search input {flex: 1;min-width: 0;}
.search input::placeholder {color: #a3a3a3;}
.apps {display: flex;gap: 9px;padding-left: 7px;}
.apps button {width: 40px;border-bottom: 3px solid transparent;border-top: 3px solid transparent;}
.apps .open {border-bottom-color: #76a9d8;}
.apps .current {width: 48px;margin-left: -4px;background-color: #484a4c;border-top-color: #484a4c;}
.tray {margin-left: auto;display: flex;align-items: center;}
.tray button {width: 28px;height: 40px;}
.tray .clock {
    width: 72px;
    flex-direction: column;
    line-height: 18px;
}
.tray .notif {width: 32px;margin-right: 12px;}
.peek {width: 1px;height: 40px;margin-right: 4px;background-color: #777;}
```
